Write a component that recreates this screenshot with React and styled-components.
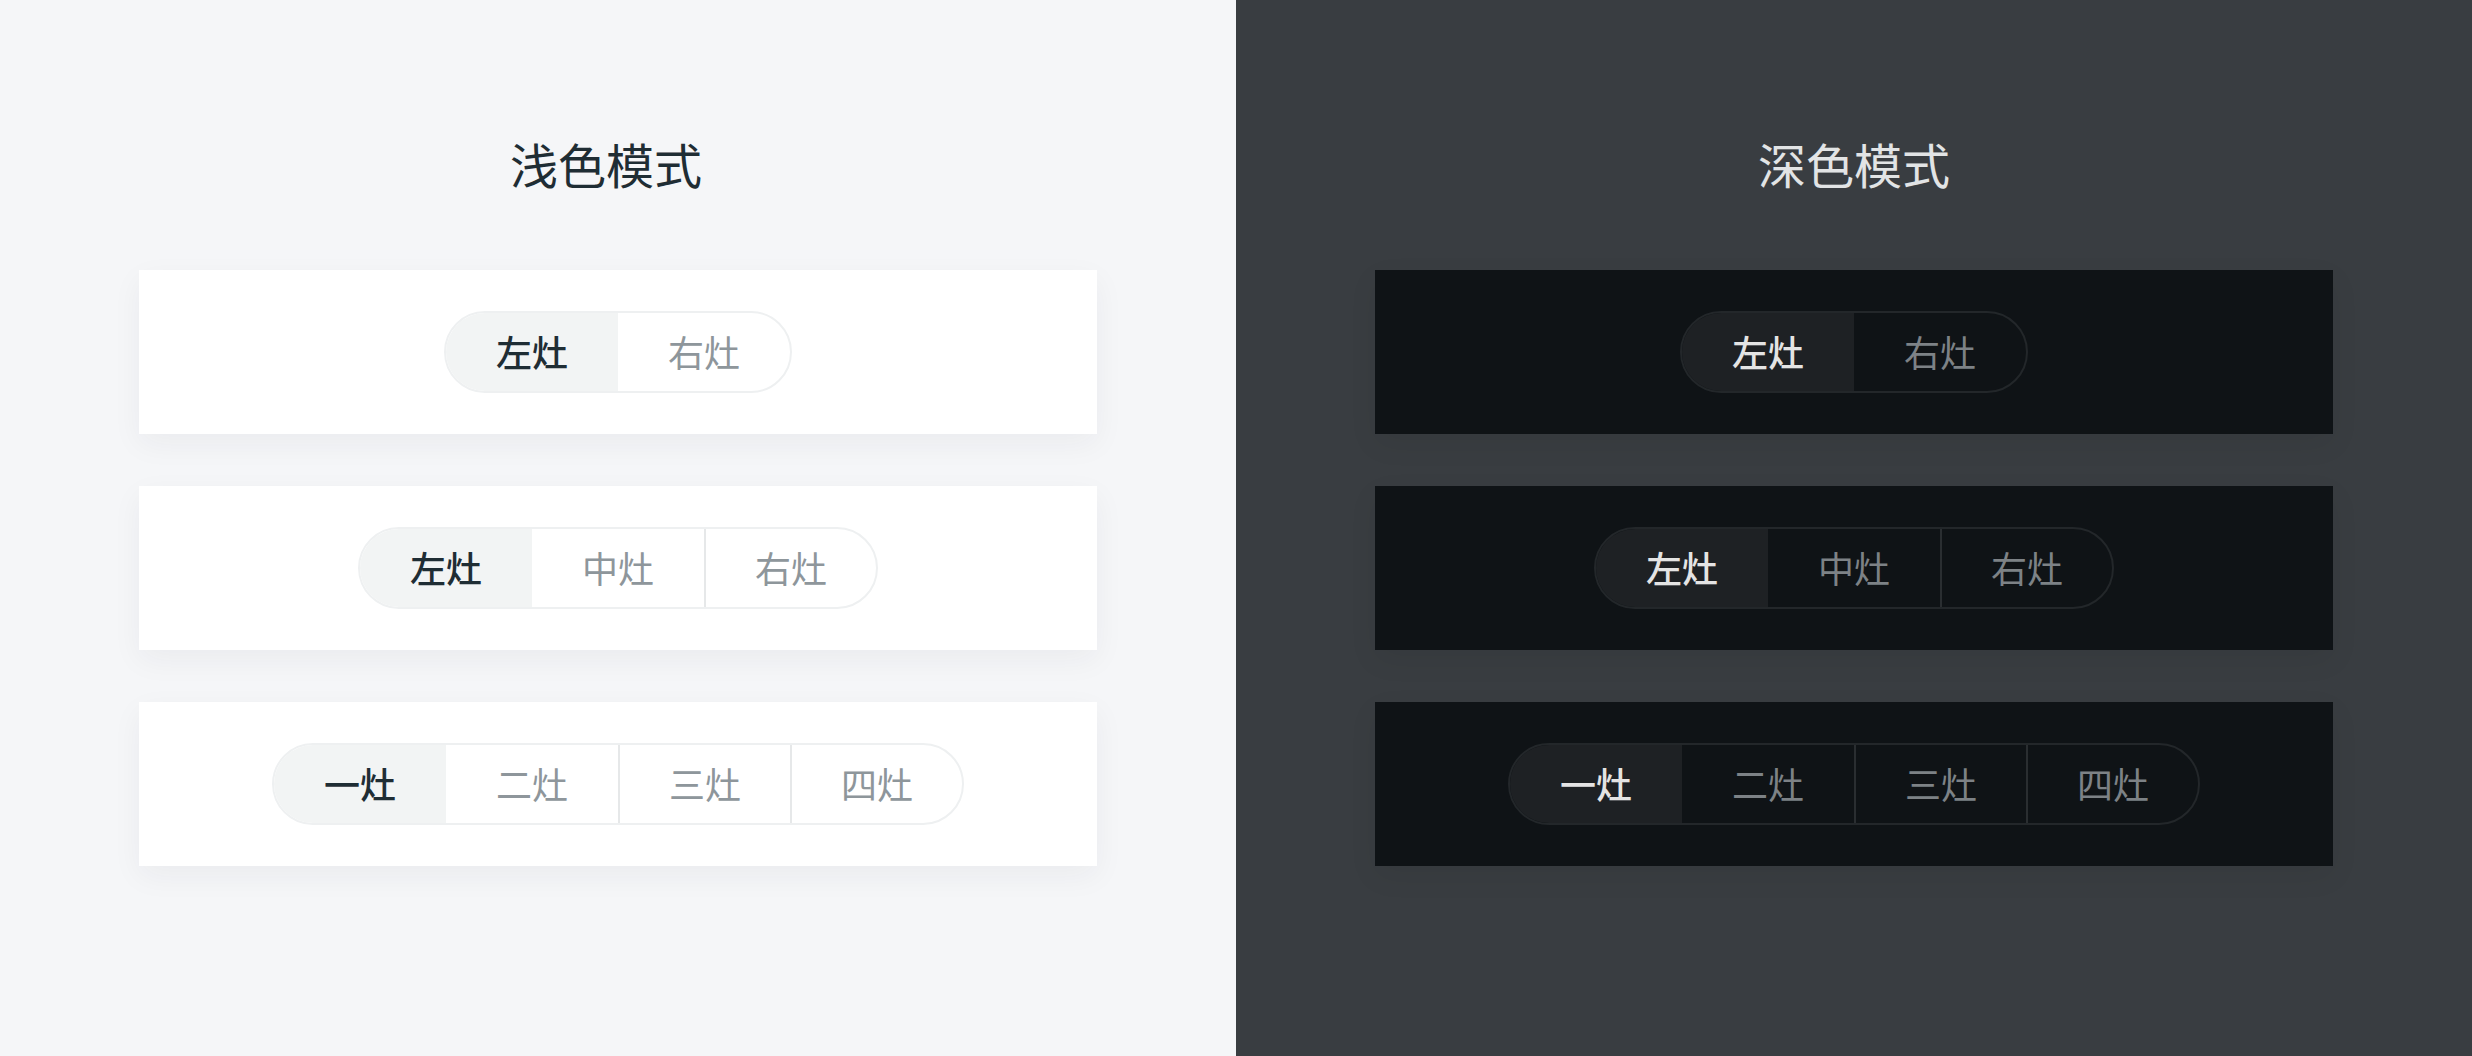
import React from "react";
import styled, { createGlobalStyle } from "styled-components";

const Global = createGlobalStyle`
  html, body { margin: 0; padding: 0; }
  body {
    font-family: "Noto Sans CJK SC", "Noto Sans", sans-serif;
    -webkit-font-smoothing: antialiased;
  }
`;

const themes = {
  light: {
    bg: "#f5f6f8",
    title: "#1f2d34",
    card: "#ffffff",
    shadow: "0 10px 28px rgba(30, 40, 60, 0.05)",
    border: "#eef0f1",
    divider: "#e6e8e9",
    activeBg: "#f2f4f4",
    activeText: "#1f2d34",
    text: "#8e969b",
    titleShift: 24,
  },
  dark: {
    bg: "#393d41",
    title: "#e2e4e5",
    card: "#0f1316",
    shadow: "0 10px 28px rgba(0, 0, 0, 0.06)",
    border: "#23272a",
    divider: "#2a2e31",
    activeBg: "#1e2124",
    activeText: "#e4e4e4",
    text: "#7d8286",
    titleShift: 0,
  },
};

const Page = styled.div`
  display: grid;
  grid-template-columns: 1fr 1fr;
  width: 2472px;
  height: 1056px;
`;

const Panel = styled.section`
  background: ${(p) => p.$t.bg};
  padding: 131px 139px 0;
  display: flex;
  flex-direction: column;
  align-items: stretch;
`;

const Title = styled.h1`
  margin: 0 0 75px;
  padding-right: ${(p) => p.$t.titleShift}px;
  font-size: 48px;
  line-height: 64px;
  font-weight: 400;
  text-align: center;
  color: ${(p) => p.$t.title};
`;

const Cards = styled.div`
  display: flex;
  flex-direction: column;
  gap: 52px;
`;

const Card = styled.div`
  height: 164px;
  background: ${(p) => p.$t.card};
  box-shadow: ${(p) => p.$t.shadow};
  display: flex;
  align-items: center;
  justify-content: center;
`;

const Segmented = styled.div`
  display: inline-flex;
  height: 82px;
  box-sizing: border-box;
  border: 2px solid ${(p) => p.$t.border};
  border-radius: 41px;
  overflow: hidden;
`;

const Segment = styled.div`
  width: 172px;
  box-sizing: border-box;
  display: flex;
  align-items: center;
  justify-content: center;
  padding-bottom: 2px;
  font-size: 36px;
  line-height: 1;
  font-weight: ${(p) => (p.$active ? 500 : 400)};
  color: ${(p) => (p.$active ? p.$t.activeText : p.$t.text)};
  background: ${(p) => (p.$active ? p.$t.activeBg : "transparent")};
  border-left: ${(p) => (p.$divider ? `2px solid ${p.$t.divider}` : "none")};
`;

const groups = [
  ["左灶", "右灶"],
  ["左灶", "中灶", "右灶"],
  ["一灶", "二灶", "三灶", "四灶"],
];

function Mode({ title, t }) {
  return (
    <Panel $t={t}>
      <Title $t={t}>{title}</Title>
      <Cards>
        {groups.map((items, gi) => (
          <Card key={gi} $t={t}>
            <Segmented $t={t}>
              {items.map((label, i) => (
                <Segment key={label} $t={t} $active={i === 0} $divider={i > 1}>
                  {label}
                </Segment>
              ))}
            </Segmented>
          </Card>
        ))}
      </Cards>
    </Panel>
  );
}

export default function App() {
  return (
    <>
      <Global />
      <Page>
        <Mode title="浅色模式" t={themes.light} />
        <Mode title="深色模式" t={themes.dark} />
      </Page>
    </>
  );
}
